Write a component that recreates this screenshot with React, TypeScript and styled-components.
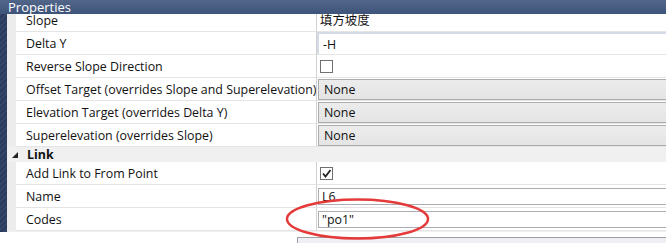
import styled, { createGlobalStyle } from "styled-components";

const Global = createGlobalStyle`
    html, body { margin: 0; padding: 0; background: #fff; }
    body { font-family: "Open Sans", "Noto Sans CJK SC", sans-serif; }
`;

const Window = styled.div`
    position: relative;
    width: 666px;
    height: 243px;
    overflow: hidden;
    display: flex;
    flex-direction: column;
    background: #fff;
    font-size: 12.4px;
    line-height: 15px;
    color: #111;
`;

const TitleBar = styled.div`
    height: 14px;
    flex: none;
    overflow: hidden;
    background: linear-gradient(#52668a, #3d5379);
    color: #fff;
    font-size: 13px;
    line-height: 14px;
    padding-left: 8px;
    position: relative;
    z-index: 1;
`;

const Body = styled.div`
    display: flex;
    height: 218px;
    flex: none;
`;

const Strip = styled.div`
    width: 7px;
    flex: none;
    background: repeating-linear-gradient(135deg, #33456a 0 2px, #2b3b5c 2px 4px);
`;

const Viewport = styled.div`
    flex: 1;
    overflow: hidden;
    background: #f0f0f0;
`;

const List = styled.div`
    margin-top: -5px;
    display: flex;
    flex-direction: column;
`;

const Row = styled.div`
    display: grid;
    grid-template-columns: 9px 300px 1fr;
    height: 23px;
`;

const Gutter = styled.div`
    background: #ececec;
`;

const Label = styled.div`
    background: #fff;
    border-bottom: 1px solid #e4e4e4;
    padding-left: 10px;
    display: flex;
    align-items: center;
    white-space: nowrap;
    overflow: hidden;
`;

const Value = styled.div`
    background: #fff;
    border-left: 1px solid #d2d2d2;
    border-bottom: 1px solid #e4e4e4;
    display: flex;
    align-items: center;
    padding-left: 3px;
    white-space: nowrap;
    overflow: hidden;
`;

const Editor = styled.div`
    align-self: stretch;
    flex: 1;
    display: flex;
    align-items: center;
    margin-left: -3px;
    padding-left: 4px;
    border-top: 2px solid #d5dbe6;
    border-left: 2px solid #d5dbe6;
`;

const Box = styled.div<{ $combo?: boolean }>`
    flex: 1;
    align-self: stretch;
    margin: ${(p) => (p.$combo ? "1px 0 0 -2px" : "3px 0 2px -2px")};
    border: 1px solid ${(p) => (p.$combo ? "#acacac" : "#abadb3")};
    border-right: none;
    background: ${(p) => (p.$combo ? "linear-gradient(#ececec, #e4e4e4)" : "#fff")};
    display: flex;
    align-items: center;
    padding-left: ${(p) => (p.$combo ? "5px" : "3px")};
`;

const Check = styled.div`
    width: 11px;
    height: 11px;
    border: 1px solid #707070;
    background: #fff;
    display: flex;
    align-items: center;
    justify-content: center;
`;

const CategoryRow = styled.div`
    height: 15px;
    display: flex;
    align-items: center;
    background: #f0f0f0;
    font-weight: 700;
    padding-left: 5px;
    gap: 9px;
`;

const Footer = styled.div`
    flex: 1;
    display: flex;
    background: #fff;
`;

const Description = styled.div`
    margin: 5px 0 0 297px;
    flex: 1;
    border-top: 1px solid #a0a0a0;
    border-left: 1px solid #a0a0a0;
    background: #eef0f6;
`;

const Annotation = styled.svg`
    position: absolute;
    left: 284px;
    top: 197px;
    pointer-events: none;
`;

const Tick = () => (
    <svg width="11" height="11" viewBox="0 0 11 11">
        <path d="M2 5.5 L4.5 8.5 L9.5 2" fill="none" stroke="#222" strokeWidth="1.8" />
    </svg>
);

const Prop = ({ label, children }: { label: string; children?: React.ReactNode }) => (
    <Row>
        <Gutter />
        <Label>{label}</Label>
        <Value>{children}</Value>
    </Row>
);

export default function App() {
    return (
        <>
            <Global />
            <Window>
                <TitleBar>Properties</TitleBar>
                <Body>
                    <Strip />
                    <Viewport>
                        <List>
                            <Prop label="Slope">填方坡度</Prop>
                            <Prop label="Delta Y">
                                <Editor>-H</Editor>
                            </Prop>
                            <Prop label="Reverse Slope Direction">
                                <Check />
                            </Prop>
                            <Prop label="Offset Target (overrides Slope and Superelevation)">
                                <Box $combo>None</Box>
                            </Prop>
                            <Prop label="Elevation Target (overrides Delta Y)">
                                <Box $combo>None</Box>
                            </Prop>
                            <Prop label="Superelevation (overrides Slope)">
                                <Box $combo>None</Box>
                            </Prop>
                            <CategoryRow>
                                <svg width="6" height="6" viewBox="0 0 6 6">
                                    <polygon points="6,0 6,6 0,6" fill="#222" />
                                </svg>
                                Link
                            </CategoryRow>
                            <Prop label="Add Link to From Point">
                                <Check>
                                    <Tick />
                                </Check>
                            </Prop>
                            <Prop label="Name">
                                <Box>L6</Box>
                            </Prop>
                            <Prop label="Codes">
                                <Box>"po1"</Box>
                            </Prop>
                        </List>
                    </Viewport>
                </Body>
                <Footer>
                    <Description />
                </Footer>
                <Annotation width="148" height="44" viewBox="0 0 148 44">
                    <ellipse cx="73.5" cy="22" rx="70.5" ry="19.5" fill="none" stroke="#e53a3a" strokeWidth="2.5" />
                </Annotation>
            </Window>
        </>
    );
}
